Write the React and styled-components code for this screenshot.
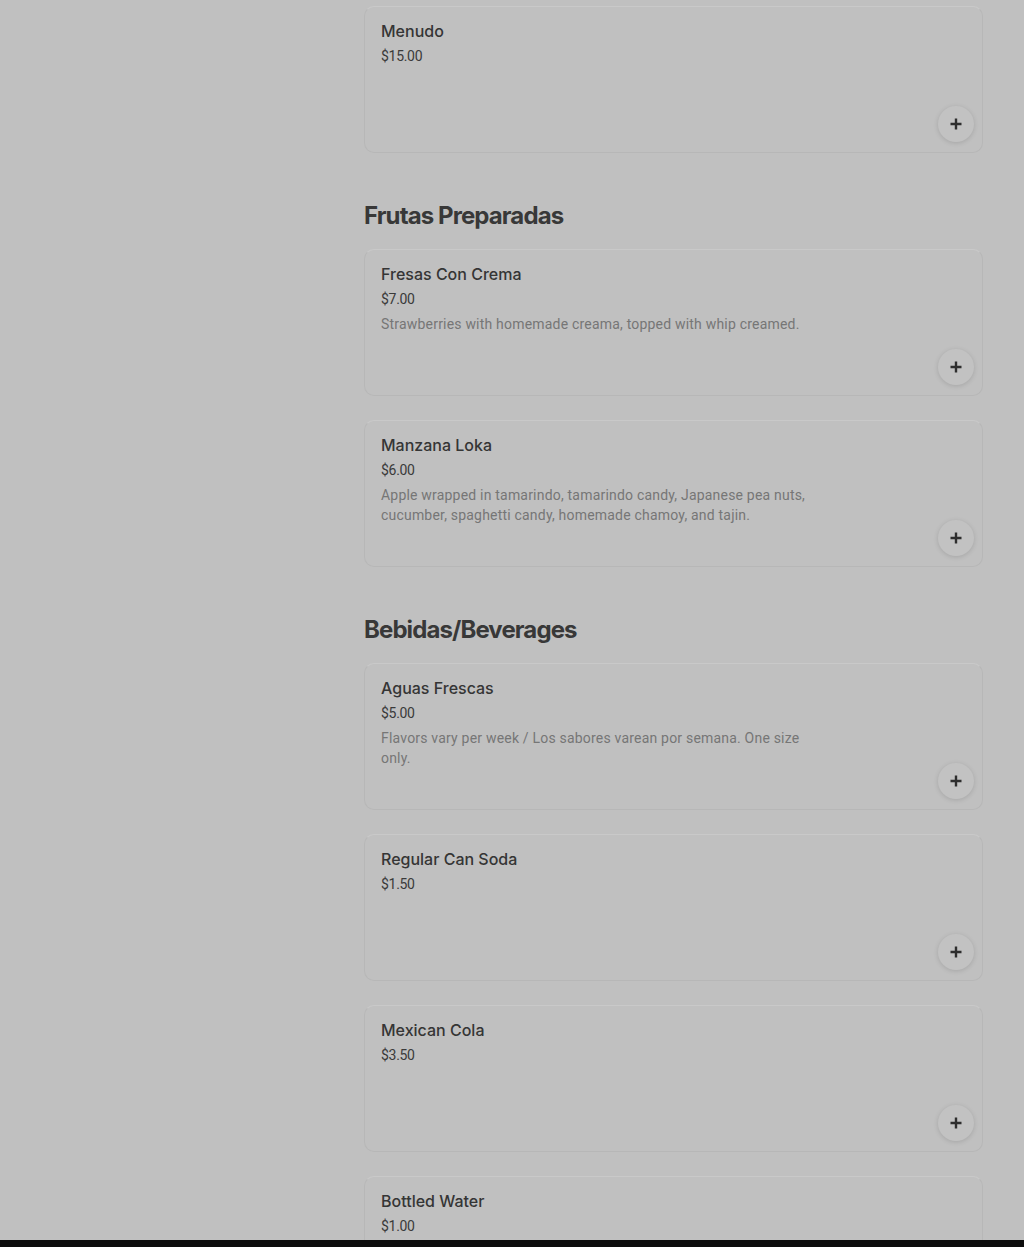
import styled, { createGlobalStyle } from "styled-components";

const GlobalStyle = createGlobalStyle`
    html, body {
        margin: 0;
        padding: 0;
        background: #c0c0c0;
    }
    * {
        box-sizing: border-box;
    }
`

const Page = styled.div`
    min-height: 1247px;
    background: #c0c0c0;
    padding: 6px 41px 0 364px;
    font-family: Roboto, "Liberation Sans", sans-serif;
`

const Section = styled.section`
    display: flex;
    flex-direction: column;
    gap: 24px;
`

const SectionTitle = styled.h2`
    margin: 47px 0 -7px;
    font-family: Inter, "Liberation Sans", sans-serif;
    font-size: 24px;
    line-height: 32px;
    font-weight: 700;
    letter-spacing: -0.9px;
    color: #383838;
`

const Card = styled.div`
    position: relative;
    height: 147px;
    padding: 12px 16px;
    border: 1px solid #b7b7b7;
    border-top-color: #c9c9c9;
    border-radius: 10px;
`

const Name = styled.div`
    font-family: Inter, Roboto, sans-serif;
    font-size: 16px;
    line-height: 24px;
    font-weight: 500;
    color: #353535;
`

const Price = styled.div`
    margin-top: 3px;
    font-size: 14px;
    line-height: 20px;
    color: #3a3a3a;
    letter-spacing: -0.3px;
`

const Description = styled.div`
    margin-top: 5px;
    max-width: 432px;
    font-size: 14px;
    line-height: 20px;
    letter-spacing: 0.2px;
    color: #767676;
`

const AddButton = styled.button`
    position: absolute;
    right: 8px;
    bottom: 10px;
    width: 36px;
    height: 36px;
    border: none;
    border-radius: 50%;
    background: #c2c2c2;
    box-shadow: 0 1px 5px rgba(0, 0, 0, 0.14);
    display: flex;
    align-items: center;
    justify-content: center;
    padding: 0;
    cursor: pointer;
`

const BottomBar = styled.div`
    position: fixed;
    left: 0;
    right: 0;
    bottom: 0;
    height: 7px;
    background: #0d0d0d;
`

const sections = [
    {
        title: null,
        items: [{ name: "Menudo", price: "$15.00" }],
    },
    {
        title: "Frutas Preparadas",
        items: [
            {
                name: "Fresas Con Crema",
                price: "$7.00",
                description: "Strawberries with homemade creama, topped with whip creamed.",
            },
            {
                name: "Manzana Loka",
                price: "$6.00",
                description:
                    "Apple wrapped in tamarindo, tamarindo candy, Japanese pea nuts, cucumber, spaghetti candy, homemade chamoy, and tajin.",
            },
        ],
    },
    {
        title: "Bebidas/Beverages",
        items: [
            {
                name: "Aguas Frescas",
                price: "$5.00",
                description: "Flavors vary per week / Los sabores varean por semana. One size only.",
            },
            { name: "Regular Can Soda", price: "$1.50" },
            { name: "Mexican Cola", price: "$3.50" },
            { name: "Bottled Water", price: "$1.00" },
        ],
    },
]

function PlusIcon() {
    return (
        <svg width="14" height="14" viewBox="0 0 14 14">
            <path d="M7 1.5v11M1.5 7h11" stroke="#2e2e2e" strokeWidth="2.4" />
        </svg>
    )
}

function App() {
    return (
        <>
            <GlobalStyle />
            <Page>
                {sections.map((section, i) => (
                    <Section key={i}>
                        {section.title && <SectionTitle>{section.title}</SectionTitle>}
                        {section.items.map((item) => (
                            <Card key={item.name}>
                                <Name>{item.name}</Name>
                                <Price>{item.price}</Price>
                                {item.description && <Description>{item.description}</Description>}
                                <AddButton aria-label="Add">
                                    <PlusIcon />
                                </AddButton>
                            </Card>
                        ))}
                    </Section>
                ))}
            </Page>
            <BottomBar />
        </>
    );
}

export default App;
